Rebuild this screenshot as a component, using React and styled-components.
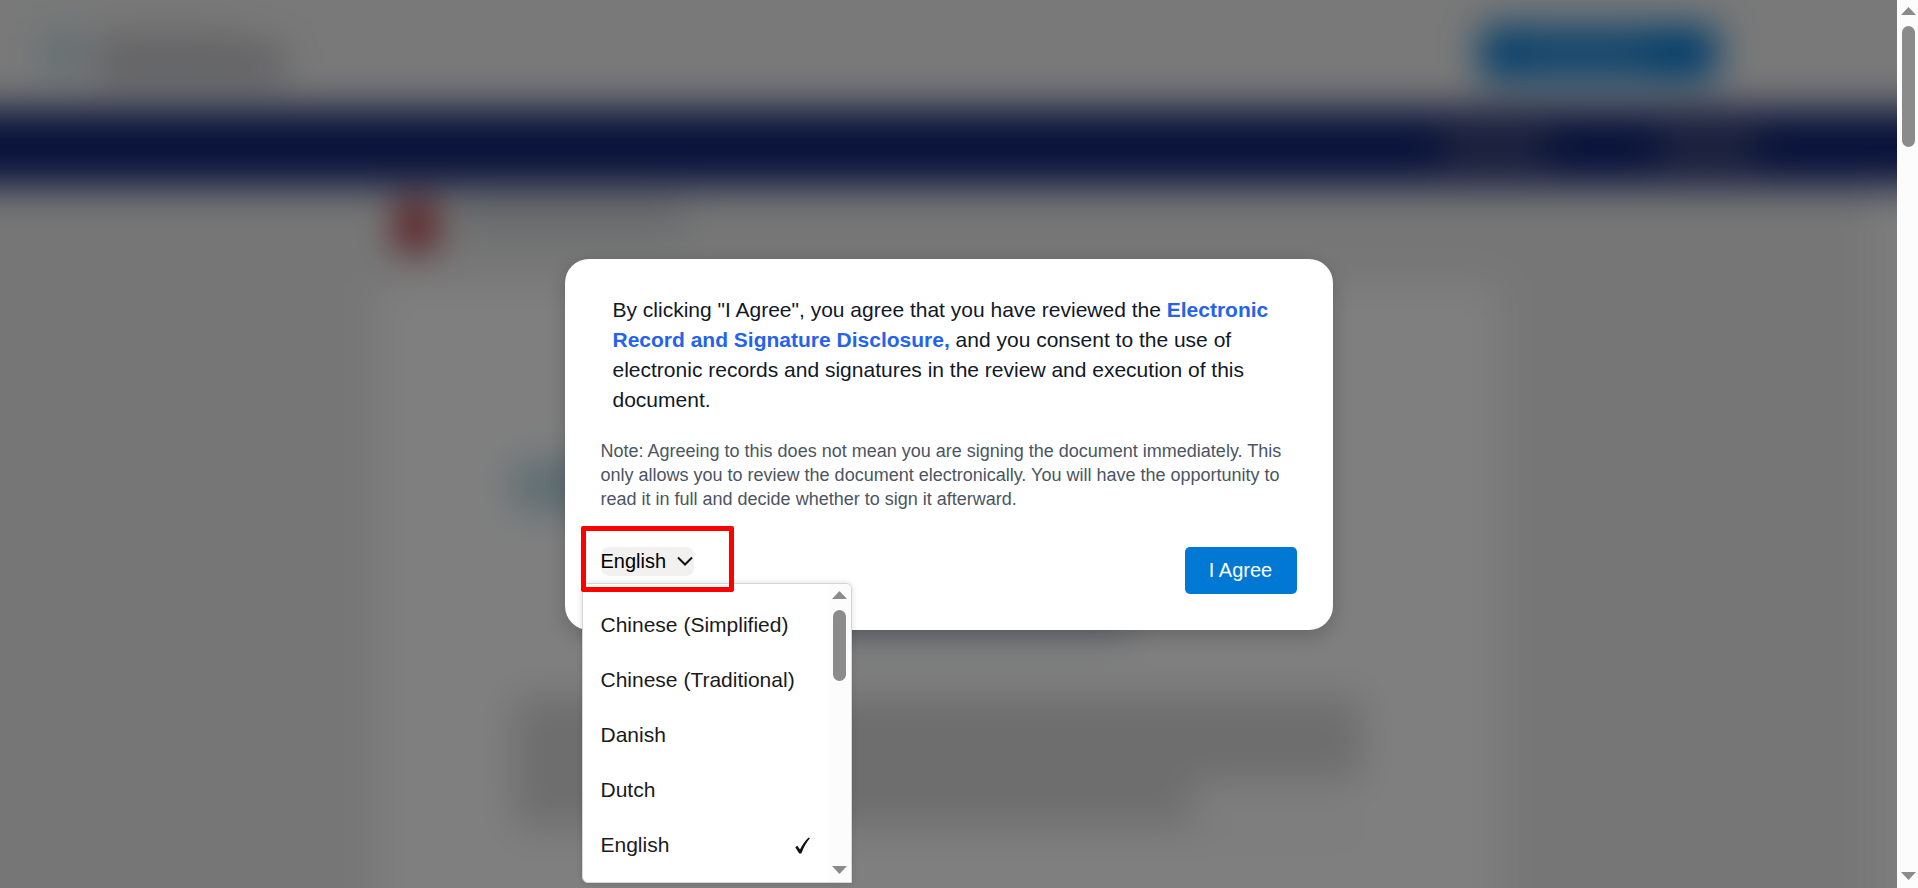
import React, { useState } from "react";
import styled, { createGlobalStyle } from "styled-components";

const GlobalStyle = createGlobalStyle`
  * {
    box-sizing: border-box;
  }

  body {
    margin: 0;
    font-family: "Liberation Sans", Arial, sans-serif;
    background: #ffffff;
  }
`;

const Screen = styled.div`
  display: flex;
  height: 100vh;
  overflow: hidden;
`;

const Viewport = styled.div`
  position: relative;
  flex: 1;
  min-width: 0;
  overflow: hidden;
`;

/* page behind the dialog, it bleeds 60px past every edge so the blur stays even */
const Page = styled.div`
  display: flex;
  flex-direction: column;
  height: calc(100% + 120px);
  margin: -60px;
  filter: blur(19px);
`;

const Header = styled.div`
  display: flex;
  justify-content: space-between;
  align-items: center;
  flex: none;
  height: 169px;
  padding: 60px 240px 4px 104px;
  background: #f2f2f2;
`;

const Brand = styled.div`
  display: flex;
  align-items: center;
  gap: 16px;
`;

const Stack = styled.div`
  display: flex;
  flex-direction: column;
  gap: ${(props) => props.$gap}px;
`;

const Bar = styled.div`
  flex: none;
  width: ${(props) => props.$width};
  height: ${(props) => props.$height}px;
  background: ${(props) => props.$color};
`;

const HeaderAction = styled.div`
  display: flex;
  align-items: center;
  width: 236px;
  height: 54px;
  padding-left: 36px;
  border-radius: 4px;
  background: #0078d4;
`;

const NavBar = styled.div`
  display: flex;
  justify-content: flex-end;
  align-items: center;
  gap: 110px;
  flex: none;
  height: 76px;
  padding-right: 200px;
  background: #102474;
`;

const Main = styled.div`
  display: flex;
  flex: 1;
  min-height: 0;
`;

const Content = styled.div`
  flex: 1;
  padding-left: 60px;
  background: #ededed;
  overflow: hidden;
`;

const Document = styled.div`
  width: 1120px;
  margin: 0 auto;
`;

const DocumentTitle = styled.div`
  display: flex;
  gap: 24px;
  height: 98px;
  padding: 18px 0 0 20px;
`;

const Sheet = styled.div`
  height: 700px;
  padding: 180px 136px 0;
  background: #ffffff;
`;

const Heading = styled.div`
  display: flex;
  justify-content: center;
  padding: 94px 0 66px;
`;

const InnerTrack = styled.div`
  width: 81px;
  background: #fcfcfc;
`;

/* dialog */
const Overlay = styled.div`
  position: absolute;
  inset: 0;
  display: flex;
  justify-content: center;
  align-items: center;
  background: rgba(0, 0, 0, 0.5);
`;

const Dialog = styled.div`
  width: 768px;
  padding: 36px;
  border-radius: 24px;
  background: #ffffff;
  box-shadow: 0 6px 20px rgba(0, 0, 0, 0.2);
`;

const Consent = styled.p`
  margin: 0 12px 24px;
  color: #111827;
  font-size: 21px;
  line-height: 30px;
`;

const DisclosureLink = styled.a`
  color: #2563eb;
  font-weight: 700;
  text-decoration: none;
`;

const Note = styled.p`
  margin: 0 0 36px;
  color: #4b5563;
  font-size: 18px;
  line-height: 24px;
`;

const Footer = styled.div`
  display: flex;
  justify-content: space-between;
  align-items: flex-start;
`;

const LanguagePicker = styled.div`
  position: relative;
`;

const SelectBox = styled.div`
  display: flex;
  align-items: center;
  border-radius: 8px;
  background: #f3f0f0;
`;

const LanguageSelect = styled.select`
  appearance: none;
  width: 94px;
  height: 29px;
  margin-right: -18px;
  padding: 0 22px 0 0;
  border: 0;
  background: transparent;
  color: #000000;
  font-family: inherit;
  font-size: 20px;
  line-height: 28px;
`;

const Chevron = styled.svg`
  flex: none;
  pointer-events: none;
`;

const Highlight = styled.div`
  position: absolute;
  top: -21px;
  left: -20px;
  width: 153px;
  height: 66px;
  border: 5px solid #ff0000;
  border-radius: 2px;
  pointer-events: none;
`;

const Menu = styled.div`
  position: absolute;
  top: 36px;
  left: -19px;
  display: flex;
  width: 270px;
  height: 300px;
  border: 1px solid #d6d6d6;
  border-radius: 6px 6px 0 6px;
  background: #ffffff;
  box-shadow: 0 0 6px rgba(0, 0, 0, 0.14);
  overflow: hidden;
`;

const MenuList = styled.ul`
  flex: 1;
  margin: 0;
  padding: 14px 0 0;
  list-style: none;
`;

const MenuItem = styled.button`
  display: flex;
  justify-content: space-between;
  align-items: center;
  width: 100%;
  height: 55px;
  padding: 0 18px;
  border: 0;
  background: transparent;
  color: #1a1a1a;
  font-family: inherit;
  font-size: 21px;
  line-height: 28px;
  text-align: left;
`;

const AgreeButton = styled.button`
  width: 112px;
  height: 47px;
  padding: 0;
  border: 0;
  border-radius: 5px;
  background: #0078d4;
  color: #ffffff;
  font-family: inherit;
  font-size: 20px;
`;

/* scroll bars */
const Track = styled.div`
  display: flex;
  flex-direction: column;
  align-items: flex-end;
  flex: none;
  width: ${(props) => props.$width}px;
  padding: 7px ${(props) => props.$inset}px 8px 0;
  background: #fcfcfc;
`;

const Thumb = styled.div`
  width: 13px;
  height: ${(props) => props.$height}px;
  margin: 11px 1px auto;
  border-radius: 7px;
  background: #8b8b8b;
`;

const languages = [
  "Chinese (Simplified)",
  "Chinese (Traditional)",
  "Danish",
  "Dutch",
  "English",
];

const paragraph = ["100%", "100%", "100%", "100%", "80%", "80%"];

const ScrollBar = ({ width, inset, thumb }) => (
  <Track $width={width} $inset={inset}>
    <svg width="15" height="8" viewBox="0 0 15 8">
      <path d="M7.5 0 15 8H0z" fill="#8b8b8b" />
    </svg>
    <Thumb $height={thumb} />
    <svg width="15" height="8" viewBox="0 0 15 8">
      <path d="M0 0h15L7.500 8z" fill="#8b8b8b" />
    </svg>
  </Track>
);

const Background = () => (
  <Page aria-hidden="true">
    <Header>
      <Brand>
        <Bar $width="36px" $height={40} $color="#bcdae2" />
        <Stack $gap={10}>
          <Bar $width="140px" $height={10} $color="#d0d0d0" />
          <Bar $width="188px" $height={34} $color="#bcbcc2" />
        </Stack>
      </Brand>
      <HeaderAction>
        <Bar $width="130px" $height={16} $color="#50a0dc" />
      </HeaderAction>
    </Header>
    <NavBar>
      <Bar $width="106px" $height={22} $color="#5c6080" />
      <Bar $width="100px" $height={22} $color="#5c6080" />
    </NavBar>
    <Main>
      <Content>
        <Document>
          <DocumentTitle>
            <Bar $width="36px" $height={46} $color="#a8101c" />
            <Bar $width="225px" $height={26} $color="#c6cccf" />
          </DocumentTitle>
          <Sheet>
            <Bar $width="140px" $height={46} $color="#b4d8e2" />
            <Heading>
              <Bar $width="380px" $height={32} $color="#c4ccd8" />
            </Heading>
            <Stack $gap={8}>
              {paragraph.map((width, index) => (
                <Bar
                  key={index}
                  $width={width}
                  $height={13}
                  $color="#c6c6c6"
                />
              ))}
              <Bar $width="100%" $height={8} $color="#eaeaea" />
            </Stack>
          </Sheet>
        </Document>
      </Content>
      <InnerTrack />
    </Main>
  </Page>
);

const App = () => {
  const [language, setLanguage] = useState("English");

  return (
    <>
      <GlobalStyle />
      <Screen>
        <Viewport>
          <Background />
          <Overlay>
            <Dialog role="dialog" aria-modal="true">
              <Consent>
                By clicking "I Agree", you agree that you have reviewed the{" "}
                <DisclosureLink href="#disclosure">
                  Electronic Record and Signature Disclosure,
                </DisclosureLink>{" "}
                and you consent to the use of electronic records and signatures
                in the review and execution of this document.
              </Consent>
              <Note>
                Note: Agreeing to this does not mean you are signing the
                document immediately. This only allows you to review the
                document electronically. You will have the opportunity to read
                it in full and decide whether to sign it afterward.
              </Note>
              <Footer>
                <LanguagePicker>
                  <SelectBox>
                    <LanguageSelect
                      aria-label="Language"
                      value={language}
                      onChange={(e) => setLanguage(e.target.value)}
                    >
                      {languages.map((name) => (
                        <option key={name}>{name}</option>
                      ))}
                    </LanguageSelect>
                    <Chevron width="17" height="10" viewBox="0 0 17 10">
                      <path
                        d="M1 1.500 8 8.500 15 1.500"
                        fill="none"
                        stroke="#111111"
                        strokeWidth="2"
                      />
                    </Chevron>
                  </SelectBox>
                  <Menu>
                    <MenuList>
                      {languages.map((name) => (
                        <li key={name}>
                          <MenuItem
                            type="button"
                            onClick={() => setLanguage(name)}
                          >
                            {name}
                            {name === language && (
                              <svg width="16" height="17" viewBox="0 0 16 17">
                                <path
                                  d="M.3 10.200 2.300 8.800l2.700 3.800C7.200 8 10.200 3.400 13.600.4l1.300.8C11.400 5.400 8.400 10.600 6.400 16.400H4.200z"
                                  fill="#111111"
                                />
                              </svg>
                            )}
                          </MenuItem>
                        </li>
                      ))}
                    </MenuList>
                    <ScrollBar width={22} inset={4} thumb={71} />
                  </Menu>
                  <Highlight />
                </LanguagePicker>
                <AgreeButton type="button">I Agree</AgreeButton>
              </Footer>
            </Dialog>
          </Overlay>
        </Viewport>
        <ScrollBar width={21} inset={2} thumb={121} />
      </Screen>
    </>
  );
};

export default App;
